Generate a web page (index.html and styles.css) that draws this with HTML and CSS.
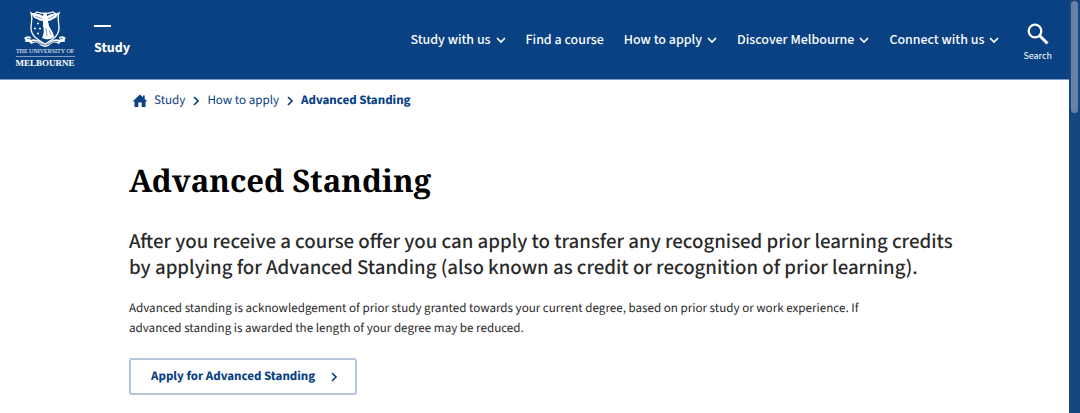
FILE: index.html
```html
<!DOCTYPE html>
<html lang="en">
<head>
<meta charset="utf-8">
<meta name="viewport" content="width=device-width, initial-scale=1">
<title>Advanced Standing</title>
<link rel="stylesheet" href="styles.css">
</head>
<body>
<svg class="defs" aria-hidden="true">
  <symbol id="chevron-down" viewBox="0 0 10 10"><path d="M1 3l4 4 4-4" fill="none" stroke="currentColor" stroke-width="1.700"/></symbol>
  <symbol id="chevron-right" viewBox="0 0 10 10"><path d="M3 1l4 4-4 4" fill="none" stroke="currentColor" stroke-width="1.700"/></symbol>
</svg>
<div class="page">
  <header class="header">
    <a class="logo" href="#" aria-label="The University of Melbourne">
      <svg class="crest" viewBox="0 0 44 38" aria-hidden="true">
        <path d="M8 3Q11 5 14 2Q22 5 30 2Q33 5 36 3C34 8 36 12 36 18C36 26 29 30 22 34C15 30 8 26 8 18C8 12 10 8 8 3Z" fill="none" stroke="#fff" stroke-width="1.3"/>
        <path d="M9 4Q16 3 20 6L20.500 3.500Q22 1.500 23.500 3.500L24 6Q29 3 35 4Q34 8 30 9Q28 11 25 11L26 16L30 23L31 27Q27 30 22 29L19 28Q22 22 20 16L20 11Q16 11 14 9Q10 8 9 4Z" fill="#fff"/>
        <path d="M12 6l7 3M32 5l-7 4M23 18l1 8M26 20l2 5" fill="none" stroke="#094183" stroke-width="0.500"/>
        <path d="M15 12.500v2M14 13.500h2M12 17.500v2M11 18.500h2M17 17.500v2M16 18.500h2M15 22.500v2M14 23.500h2" stroke="#fff" stroke-width="1"/>
        <path d="M1 28Q4 25 8 27L7 30Q13 28 17 32Q22 36 27 32Q31 28 37 30L36 27Q40 25 43 28Q41 29 42 32Q37 31 36 34Q31 31 28 34Q22 40 16 34Q13 31 8 34Q7 31 2 32Q3 29 1 28Z" fill="#fff"/>
        <path d="M4 29l3-1M9 31.500Q14 31 18 34Q22 36 26 34Q30 31 35 31.500M37 28l3 1" fill="none" stroke="#094183" stroke-width="0.700"/>
      </svg>
      <span class="logo-top">THE UNIVERSITY OF</span>
      <span class="logo-name">MELBOURNE</span>
    </a>
    <a class="section" href="#">Study</a>
    <nav class="nav" aria-label="Main">
      <button type="button">Study with us <svg class="icon"><use href="#chevron-down"/></svg></button>
      <a href="#">Find a course</a>
      <button type="button">How to apply <svg class="icon"><use href="#chevron-down"/></svg></button>
      <button type="button">Discover Melbourne <svg class="icon"><use href="#chevron-down"/></svg></button>
      <button type="button">Connect with us <svg class="icon"><use href="#chevron-down"/></svg></button>
    </nav>
    <button class="search" type="button">
      <svg viewBox="0 0 22 22" aria-hidden="true"><circle cx="8" cy="8" r="6.300" fill="none" stroke="#fff" stroke-width="2.300"/><path d="M12.500 12.500l8 8" stroke="#fff" stroke-width="3"/></svg>
      Search
    </button>
  </header>
  <nav class="crumbs" aria-label="Breadcrumb">
    <a class="home" href="#" aria-label="Home"><svg viewBox="0 0 16 14"><path d="M8 0.500L0.500 7.500H2.500V13H6.300V8.500H9.700V13H13.500V7.500H15.500L12.700 4.900V1.500H11V3.300Z" fill="currentColor"/></svg></a>
    <a href="#">Study</a>
    <svg class="icon"><use href="#chevron-right"/></svg>
    <a href="#">How to apply</a>
    <svg class="icon"><use href="#chevron-right"/></svg>
    <a class="current" href="#" aria-current="page">Advanced Standing</a>
  </nav>
  <main class="content">
    <h1>Advanced Standing</h1>
    <p class="lead">After you receive a course offer you can apply to transfer any recognised prior learning credits by applying for Advanced Standing (also known as credit or recognition of prior learning).</p>
    <p class="text">Advanced standing is acknowledgement of prior study granted towards your current degree, based on prior study or work experience. If advanced standing is awarded the length of your degree may be reduced.</p>
    <a class="cta" href="#">Apply for Advanced Standing <svg class="icon"><use href="#chevron-right"/></svg></a>
  </main>
</div>
<div class="track" aria-hidden="true"><div class="thumb"></div></div>
</body>
</html>
```
FILE: styles.css
```css
* { box-sizing: border-box; }

body {
  margin: 0;
  display: flex;
  min-height: 100vh;
  background: #fff;
  color: #2a2a2a;
  font-family: "Source Sans 3", "Noto Sans CJK SC", "Noto Sans", sans-serif;
  font-size: 14px;
  line-height: 20px;
  text-rendering: geometricPrecision;
}

a { color: inherit; text-decoration: none; }

button {
  padding: 0;
  border: 0;
  background: none;
  color: inherit;
  font: inherit;
}

.defs { position: absolute; width: 0; height: 0; }
.icon { width: 10px; height: 10px; flex: none; }
.page { flex: 1; min-width: 0; }

.header {
  display: flex;
  align-items: center;
  height: 80px;
  padding: 0 17px 0 16px;
  border-bottom: 1px solid #7f9cc2;
  background: #094183;
  color: #fff;
}

.logo {
  display: flex;
  flex-direction: column;
  align-items: center;
  width: 58px;
  font-family: "Liberation Serif", serif;
  white-space: nowrap;
}
.crest { width: 44px; height: 38px; }
.logo-top { font-size: 6px; line-height: 8px; }
.logo-name {
  border-top: 1px solid #7f9cc2;
  font-size: 9px;
  font-weight: 700;
  line-height: 12px;
}

.section {
  margin-left: 20px;
  padding-top: 3px;
  font-weight: 700;
}
.section::before {
  content: "";
  display: block;
  width: 17px;
  height: 2px;
  margin-bottom: 11px;
  background: #fff;
}

.nav {
  display: flex;
  gap: 20px;
  margin-left: auto;
  font-weight: 500;
  white-space: nowrap;
}
.nav button { display: flex; align-items: center; gap: 5px; }

.search {
  display: flex;
  flex-direction: column;
  align-items: center;
  gap: 3px;
  margin-left: 24px;
  padding-top: 8px;
  font-size: 10px;
  line-height: 16px;
}
.search svg { width: 22px; height: 22px; }

.crumbs {
  display: flex;
  align-items: center;
  gap: 6px;
  padding: 11px 0 0 132px;
  color: #094183;
  font-size: 13px;
}
.home { display: flex; }
.home svg { width: 16px; height: 14px; }
.current { font-weight: 700; }

.content { padding: 47px 100px 18px 129px; }

h1 {
  margin: 0 0 25px;
  color: #000;
  font: bold 31px/46px "Noto Serif", "Droid Serif", "Noto Serif CJK SC", "Liberation Serif", serif;
}
.lead {
  max-width: 832px;
  margin: 0 0 18px;
  font-size: 21px;
  font-weight: 500;
  line-height: 26px;
}
.text { max-width: 780px; margin: 0 0 19px; font-size: 13px; }

.cta {
  display: inline-flex;
  align-items: center;
  gap: 14px;
  padding: 7px 16px 6px 20px;
  border: 2px solid #b5c6dc;
  border-radius: 3px;
  color: #094183;
  font-size: 13px;
  font-weight: 700;
}

.track { width: 11px; padding: 1px 2px 0; background: #164780; }
.thumb { height: 112px; border-radius: 4px; background: #6782aa; }
```
